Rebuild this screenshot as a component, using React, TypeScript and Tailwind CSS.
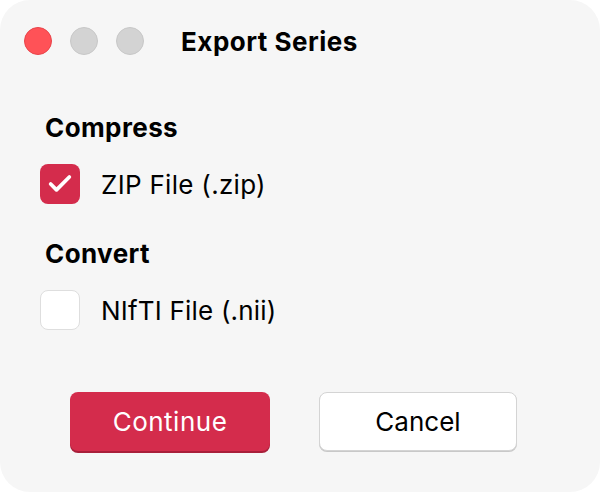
import { Check } from 'lucide-react';

export default function App() {
  return (
    <div className="w-[600px] h-[492px] bg-white" style={{ fontFamily: 'Inter, "Noto Sans", sans-serif' }}>
      <div className="w-full h-full bg-[#f6f6f6] rounded-[30px] flex flex-col">
        {/* Title bar */}
        <div className="flex items-center h-[82px] pl-[24px]">
          <div className="flex gap-[18px]">
            <span className="w-[28px] h-[28px] rounded-full bg-[#ff5257] border border-[#e9444a]" />
            <span className="w-[28px] h-[28px] rounded-full bg-[#d3d3d3] border border-[#c8c8c8]" />
            <span className="w-[28px] h-[28px] rounded-full bg-[#d3d3d3] border border-[#c8c8c8]" />
          </div>
          <h1 className="ml-[37px] text-[26px] font-bold text-black tracking-[0.5px]">Export Series</h1>
        </div>

        <div className="px-[40px] pt-[28px]">
          <h2 className="ml-[5px] text-[26px] font-bold text-black leading-[36px] tracking-[0.4px]">Compress</h2>
          <label className="flex items-center mt-[18px] h-[40px]">
            <span className="w-[40px] h-[40px] rounded-[8px] bg-[#d42c4c] flex items-center justify-center">
              <Check className="w-[28px] h-[28px] text-white" strokeWidth={3.2} />
            </span>
            <span className="ml-[21px] text-[26px] text-black tracking-[0.3px]">ZIP File (.zip)</span>
          </label>

          <h2 className="ml-[5px] mt-[32px] text-[26px] font-bold text-black leading-[36px] tracking-[0.4px]">Convert</h2>
          <label className="flex items-center mt-[18px] h-[40px]">
            <span className="w-[40px] h-[40px] rounded-[8px] bg-white border-[1.5px] border-[#dedede]" />
            <span className="ml-[21px] text-[26px] text-black tracking-[0.2px]">NIfTI File (.nii)</span>
          </label>
        </div>

        <div className="flex gap-[49px] pl-[70px] mt-[62px]">
          <button className="w-[200px] h-[59px] rounded-[8px] bg-[#d42c4c] text-white text-[26px] tracking-[0.5px] shadow-[0_2px_0_#a81f3a]">
            Continue
          </button>
          <button className="w-[198px] h-[59px] rounded-[8px] bg-white border border-[#d4d4d4] text-black text-[26px] shadow-[0_1px_0_#c8c8c8]">
            Cancel
          </button>
        </div>
      </div>
    </div>
  );
}
